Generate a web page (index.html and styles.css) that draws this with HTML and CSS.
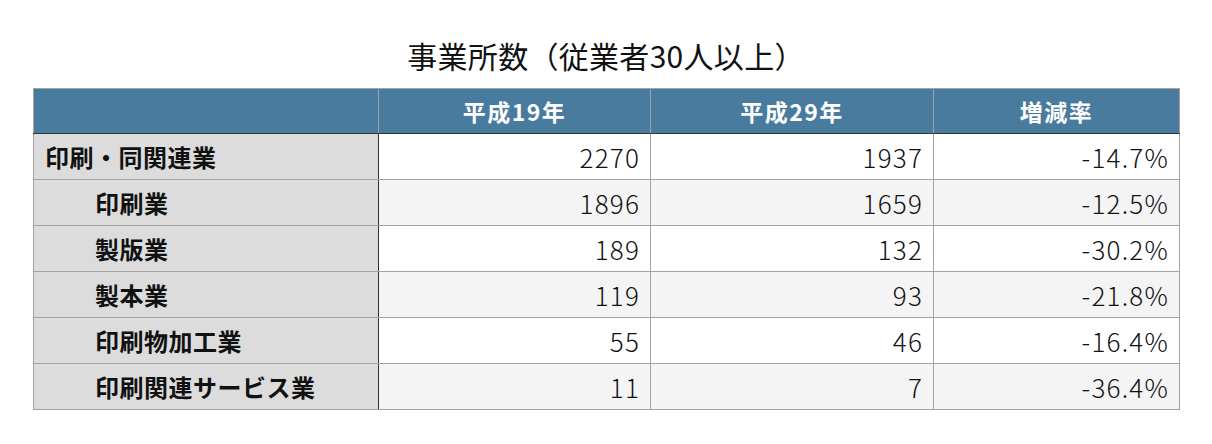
FILE: index.html
```html
<!DOCTYPE html>
<html lang="ja">
<head>
<meta charset="utf-8">
<link rel="stylesheet" href="styles.css">
</head>
<body>
<div class="wrap">
  <h1 class="title">事業所数（従業者30人以上）</h1>
  <table class="tbl">
    <colgroup>
      <col class="c1"><col class="c2"><col class="c3"><col class="c4">
    </colgroup>
    <thead>
      <tr><th></th><th>平成19年</th><th>平成29年</th><th>増減率</th></tr>
    </thead>
    <tbody>
      <tr class="odd"><th class="lbl">印刷・同関連業</th><td>2270</td><td>1937</td><td>-14.7%</td></tr>
      <tr class="even"><th class="lbl sub">印刷業</th><td>1896</td><td>1659</td><td>-12.5%</td></tr>
      <tr class="odd"><th class="lbl sub">製版業</th><td>189</td><td>132</td><td>-30.2%</td></tr>
      <tr class="even"><th class="lbl sub">製本業</th><td>119</td><td>93</td><td>-21.8%</td></tr>
      <tr class="odd"><th class="lbl sub">印刷物加工業</th><td>55</td><td>46</td><td>-16.4%</td></tr>
      <tr class="even"><th class="lbl sub">印刷関連サービス業</th><td>11</td><td>7</td><td>-36.4%</td></tr>
    </tbody>
  </table>
</div>
</body>
</html>
```
FILE: styles.css
```css
html, body {
  margin: 0;
  padding: 0;
  background: #ffffff;
}
body {
  font-family: "Noto Sans CJK JP", "Noto Sans", sans-serif;
  color: #111;
}
.wrap {
  padding: 33px 33px 0 33px;
}
.title {
  margin: 0 0 11px 0;
  font-size: 30px;
  font-weight: 400;
  letter-spacing: 0.3px;
  text-align: center;
  line-height: 44px;
  height: 44px;
  color: #111;
}
.tbl {
  border-collapse: collapse;
  width: 1146px;
  table-layout: fixed;
}
.c1 { width: 345px; }
.c2 { width: 272px; }
.c3 { width: 283px; }
.c4 { width: 246px; }
.tbl th, .tbl td {
  border: 1px solid #a3a3a3;
  height: 46px;
  padding: 0 12px;
  box-sizing: border-box;
  line-height: 1;
}
.tbl thead th {
  height: 45px;
  background: #487b9e;
  color: #ffffff;
  font-size: 23px;
  font-weight: 700;
  letter-spacing: 1.5px;
  text-align: center;
  border-bottom: 1px solid #333;
}
.tbl tbody th.lbl {
  background: #dcdcdc;
  text-align: left;
  font-size: 24px;
  font-weight: 700;
  letter-spacing: 0.5px;
  color: #111;
  border-right: 1px solid #333;
  padding-left: 11px;
}
.tbl tbody th.sub {
  padding-left: 61px;
}
.tbl tbody td {
  text-align: right;
  font-size: 26px;
  font-weight: 300;
  letter-spacing: 1.2px;
  color: #111;
  padding-right: 10px;
}
.tbl tr.odd td { background: #ffffff; }
.tbl tr.even td { background: #f4f4f4; }
```
